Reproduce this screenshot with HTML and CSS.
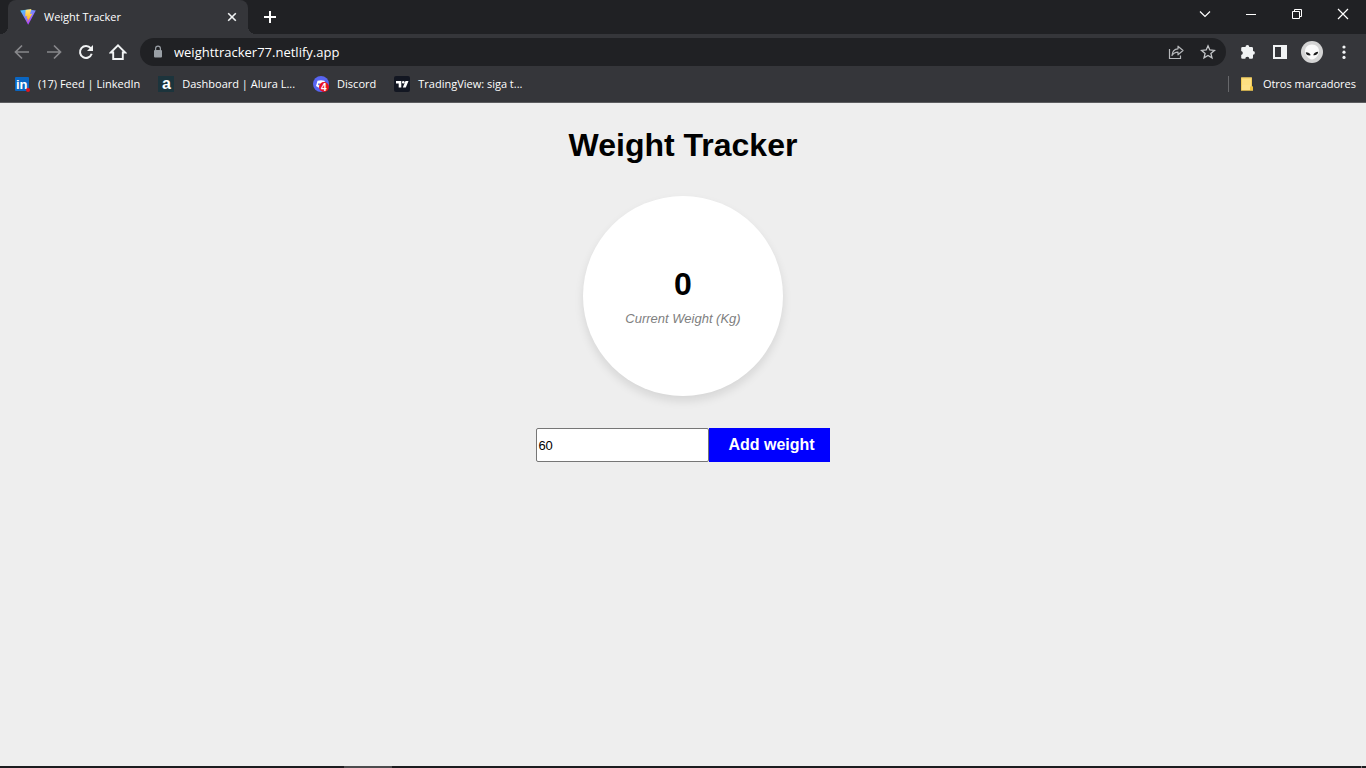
FILE: index.html
```html
<!DOCTYPE html>
<html lang="es">
<head>
<meta charset="utf-8">
<title>Weight Tracker</title>
<link rel="stylesheet" href="styles.css">
</head>
<body>
<header class="browser">
  <div class="tabstrip">
    <div class="tab">
      <svg class="icon" width="16" height="16" viewBox="0 0 16 16">
        <defs>
          <linearGradient id="shield" x1="0" y1="0" x2="0.6" y2="1"><stop offset="0" stop-color="#41d1ff"/><stop offset="1" stop-color="#bd34fe"/></linearGradient>
          <linearGradient id="bolt" x1="0" y1="0" x2="0" y2="1"><stop offset="0" stop-color="#ffea83"/><stop offset="1" stop-color="#ffa800"/></linearGradient>
        </defs>
        <path d="M0.2 1.6 8 0.6 15.8 1.6 8.2 15.8Z" fill="url(#shield)"/>
        <path d="M11.4 0 5.600 1.1 5.200 7.400 7.200 7 6.600 10 8 9.600 7.300 13.200 12.300 4.800 10 5.100Z" fill="url(#bolt)"/>
      </svg>
      <span class="tab-title">Weight Tracker</span>
      <button class="tool tab-close" aria-label="Cerrar pestaña"><svg width="16" height="16" viewBox="0 0 16 16"><path d="M4.2 4.2 11.8 11.8M11.8 4.2 4.2 11.8" stroke="#f1f3f4" stroke-width="1.6"/></svg></button>
    </div>
    <button class="tool" aria-label="Nueva pestaña"><svg width="16" height="16" viewBox="0 0 16 16"><path d="M8 2V14M2 8H14" stroke="#fff" stroke-width="2"/></svg></button>
    <div class="window-controls">
      <button class="window-button" aria-label="Buscar pestañas"><svg width="12" height="12" viewBox="0 0 12 12"><path d="M1 3.5 6 8.5 11 3.5" fill="none" stroke="#fff" stroke-width="1.200"/></svg></button>
      <button class="window-button" aria-label="Minimizar"><svg width="12" height="12" viewBox="0 0 12 12"><path d="M1 6.5H11" stroke="#fff"/></svg></button>
      <button class="window-button" aria-label="Restaurar"><svg width="12" height="12" viewBox="0 0 12 12"><path d="M1.500 3.500H8.500V10.500H1.500ZM3.500 3.500V1.500H10.500V8.500H8.500" fill="none" stroke="#fff"/></svg></button>
      <button class="window-button" aria-label="Cerrar"><svg width="12" height="12" viewBox="0 0 12 12"><path d="M1 1 11 11M11 1 1 11" stroke="#fff" stroke-width="1.200"/></svg></button>
    </div>
  </div>

  <div class="toolbar">
    <button class="tool" aria-label="Atrás"><svg width="16" height="16" viewBox="0 0 16 16"><path d="M15 8H2M8 1.500 1.500 8 8 14.500" fill="none" stroke="#87888b" stroke-width="1.700"/></svg></button>
    <button class="tool" aria-label="Adelante"><svg width="16" height="16" viewBox="0 0 16 16"><path d="M1 8H14M8 1.500 14.500 8 8 14.500" fill="none" stroke="#87888b" stroke-width="1.700"/></svg></button>
    <button class="tool" aria-label="Recargar"><svg width="16" height="16" viewBox="0 0 16 16"><path d="M13.700 9.800A6 6 0 1 1 12.700 4.200" fill="none" stroke="#f1f3f4" stroke-width="2"/><path d="M15 1V7H9Z" fill="#f1f3f4"/></svg></button>
    <button class="tool" aria-label="Página principal"><svg width="18" height="18" viewBox="0 0 18 18"><path d="M1.800 9.500 9 2.400 16.200 9.500H13.800V16H4.200V9.500Z" fill="none" stroke="#f1f3f4" stroke-width="1.900"/></svg></button>
    <div class="address">
      <svg class="icon" width="12" height="14" viewBox="0 0 12 14"><rect x="2" y="5" width="8" height="7.500" rx="1" fill="#9aa0a6"/><path d="M3.600 5.500V3.500A2.400 2.400 0 0 1 8.400 3.500V5.500" fill="none" stroke="#9aa0a6" stroke-width="1.200"/></svg>
      <input class="address-input" type="text" aria-label="Dirección" value="weighttracker77.netlify.app">
      <button class="tool" aria-label="Compartir"><svg width="16" height="16" viewBox="0 0 16 16"><path d="M1.500 5V14.500H12.500V11.500" fill="none" stroke="#b6b8bb" stroke-width="1.200"/><path d="M4 11.500C4.300 7 6.500 5 10 4.800V2.200L15 6.500 10 10.800V8.200C7.500 8.200 5.500 9 4 11.500Z" fill="none" stroke="#b6b8bb" stroke-width="1.200" stroke-linejoin="round"/></svg></button>
      <button class="tool" aria-label="Añadir a marcadores"><svg width="16" height="16" viewBox="0 0 16 16"><path d="M8 1.800 9.800 6 14.400 6.400 10.900 9.400 12 13.900 8 11.500 4 13.900 5.100 9.400 1.600 6.400 6.200 6Z" fill="none" stroke="#c4c6c9" stroke-width="1.300"/></svg></button>
    </div>
    <button class="tool" aria-label="Extensiones"><svg width="16" height="16" viewBox="0 0 16 16"><path d="M5.500 3A1.900 1.900 0 0 1 9.300 3H11.700A1.300 1.300 0 0 1 13 4.300V6.900A1.900 1.900 0 0 1 13 10.700V13.500A1.300 1.300 0 0 1 11.700 14.800H9.300A2 2 0 0 0 5.300 14.800H2.500A1.300 1.300 0 0 1 1.200 13.500V11A2.100 2.100 0 0 0 1.200 6.900V4.300A1.300 1.300 0 0 1 2.500 3Z" fill="#f1f3f4"/></svg></button>
    <button class="tool" aria-label="Panel lateral"><svg width="16" height="16" viewBox="0 0 16 16"><path d="M1 1H15V15H1ZM3 3V13H9V3Z" fill="#f1f3f4" fill-rule="evenodd"/></svg></button>
    <button class="tool" aria-label="Perfil"><svg width="22" height="22" viewBox="0 0 22 22"><circle cx="11" cy="11" r="11" fill="#d4d4d4"/><path d="M11 3.500C6.500 3.500 4 6.500 4 10.500 4.200 14.500 8.200 18.500 11 18.500S17.800 14.500 18 10.500C18 6.500 15.500 3.500 11 3.500Z" fill="#fafafa"/><path d="M4.800 11.200C7.200 11.200 9.300 12.200 9.700 14.300 7 14.800 5 13.700 4.800 11.200ZM17.200 10.800C14.700 10.800 12.700 12 12.300 14.200 15 14.600 17 13.300 17.200 10.800Z" fill="#1b1b1b"/></svg></button>
    <button class="tool" aria-label="Menú"><svg width="16" height="16" viewBox="0 0 16 16"><g fill="#f1f3f4"><circle cx="8" cy="3" r="1.600"/><circle cx="8" cy="8.200" r="1.600"/><circle cx="8" cy="13.400" r="1.600"/></g></svg></button>
  </div>

  <nav class="bookmarks" aria-label="Marcadores">
    <a class="bookmark" href="#">
      <svg class="icon" width="16" height="16" viewBox="0 0 16 16"><rect x="1" y="1" width="14" height="14" rx="1" fill="#0a66c2"/><text class="logo-text" x="2" y="12.500" font-size="13" fill="#fff">in</text><circle cx="14" cy="14" r="2" fill="#e0131d"/></svg>
      <span>(17) Feed | LinkedIn</span>
    </a>
    <a class="bookmark" href="#">
      <svg class="icon" width="16" height="16" viewBox="0 0 16 16"><rect width="16" height="16" fill="#1c343c"/><text class="logo-text" x="4" y="13" font-size="16" fill="#fff">a</text></svg>
      <span>Dashboard | Alura L...</span>
    </a>
    <a class="bookmark" href="#">
      <svg class="icon" width="16" height="16" viewBox="0 0 16 16"><circle cx="8" cy="8" r="8" fill="#5865f2"/><path d="M4.500 4.700Q8 3.700 11.500 4.700L13 10 10.500 11.500H5.500L3 10Z" fill="#fff"/><circle cx="6" cy="8.300" r="1" fill="#5865f2"/><circle cx="11" cy="11" r="5" fill="#e81123"/><text class="logo-text" x="8" y="14.500" font-size="10" fill="#fff">4</text></svg>
      <span>Discord</span>
    </a>
    <a class="bookmark" href="#">
      <svg class="icon" width="16" height="16" viewBox="0 0 16 16"><rect width="16" height="16" rx="2" fill="#131722"/><path d="M2 5H7.300V11.500H4.700V7.500H2ZM11.500 5H14.500L11.800 11.500H8.800Z" fill="#fff"/><circle cx="9.300" cy="6.300" r="1.300" fill="#fff"/></svg>
      <span>TradingView: siga t...</span>
    </a>
    <a class="bookmark other-bookmarks" href="#">
      <svg class="icon" width="16" height="16" viewBox="0 0 16 16"><path d="M2 1.500H13V11L14 10.500V14.500H2Z" fill="#ffe082"/><path d="M2.500 14V2H12.500V11.500" fill="none" stroke="#f2cc58"/><path d="M2 14H11V10.500H14V14.500H2Z" fill="#f2c53d"/><rect x="3" y="9" width="8" height="5" fill="#ffe28a"/></svg>
      <span>Otros marcadores</span>
    </a>
  </nav>
</header>

<main class="page">
  <h1 class="title">Weight Tracker</h1>
  <section class="weight-circle" aria-label="Current Weight">
    <span class="weight-value">0</span>
    <small class="weight-label">Current Weight (Kg)</small>
  </section>
  <form class="weight-form">
    <input class="weight-input" type="number" aria-label="Weight" value="60">
    <button class="weight-submit" type="submit">Add weight</button>
  </form>
</main>
<footer class="taskbar"><span class="taskbar-active"></span><span class="taskbar-edge"></span></footer>
</body>
</html>
```

FILE: styles.css
```css
* { box-sizing: border-box; }

body {
  margin: 0;
  min-height: 100vh;
  display: flex;
  flex-direction: column;
  background: #eee;
  font-family: "Liberation Sans", Arial, sans-serif;
}

button { font: inherit; border: 0; cursor: pointer; }
svg { display: block; }
.icon { flex: none; }

.browser {
  background: #35363a;
  border-bottom: 1px solid #5c5d60;
  color: #fff;
  font: 12px/16px "Open Sans", "Noto Sans", sans-serif;
}

.tool {
  flex: none;
  display: grid;
  place-items: center;
  width: 32px;
  height: 28px;
  padding: 0;
  background: transparent;
}

.tabstrip {
  display: flex;
  height: 34px;
  padding-left: 8px;
  background: #202124;
}

.tabstrip > .tool { height: 34px; margin-left: 6px; }

.tab {
  position: relative;
  display: flex;
  align-items: center;
  gap: 8px;
  width: 240px;
  padding: 0 8px 0 12px;
  background: #35363a;
  border-radius: 8px 8px 0 0;
}

/* Curved feet where the active tab meets the toolbar */
.tab::before,
.tab::after {
  content: "";
  position: absolute;
  bottom: 0;
  width: 8px;
  height: 8px;
}

.tab::before { right: 100%; background: radial-gradient(circle at 0 0, #202124 8px, #35363a 8px); }
.tab::after { left: 100%; background: radial-gradient(circle at 100% 0, #202124 8px, #35363a 8px); }

.tab-title { flex: 1; font-size: 11px; }
.tab-close { width: 16px; }

.window-controls { display: flex; margin-left: auto; height: 28px; }

.window-button {
  display: grid;
  place-items: center;
  width: 46px;
  padding: 0;
  background: transparent;
}

.toolbar {
  display: flex;
  align-items: center;
  height: 36px;
  padding: 0 6px;
}

.address {
  flex: 1;
  display: flex;
  align-items: center;
  height: 28px;
  margin: 0 6px;
  padding: 0 2px 0 12px;
  background: #202124;
  border-radius: 14px;
}

.address-input {
  flex: 1;
  min-width: 0;
  margin-left: 10px;
  padding: 0;
  border: 0;
  background: transparent;
  color: #fff;
  font: 13px/20px "Open Sans", "Noto Sans", sans-serif;
}

.bookmarks {
  display: flex;
  align-items: center;
  gap: 18px;
  height: 32px;
  padding: 0 10px 4px 14px;
}

.bookmark {
  display: flex;
  align-items: center;
  gap: 8px;
  color: #fff;
  font-size: 11px;
  text-decoration: none;
}

.other-bookmarks {
  margin-left: auto;
  padding-left: 10px;
  border-left: 1px solid #67686b;
}

.logo-text { font-family: "Liberation Sans", sans-serif; font-weight: bold; }

.page {
  flex: 1;
  display: flex;
  flex-direction: column;
  align-items: center;
}

.title {
  margin: 24px 0 32px;
  font-size: 32px;
  line-height: 37px;
}

.weight-circle {
  display: flex;
  flex-direction: column;
  align-items: center;
  justify-content: center;
  gap: 8px;
  width: 200px;
  height: 200px;
  margin-bottom: 32px;
  border-radius: 50%;
  background: #fff;
  box-shadow: 0 5px 10px rgba(0, 0, 0, 0.1);
}

.weight-value { font-size: 32px; line-height: 37px; font-weight: bold; }
.weight-label { font-size: 13px; line-height: 16px; font-style: italic; color: #808080; }

.weight-form { display: flex; }

.weight-input {
  width: 173px;
  padding: 1px;
  border: 1px solid #767676;
  border-radius: 2px;
  background: #fff;
  font: 13px "Liberation Sans", Arial, sans-serif;
}

.weight-submit {
  padding: 8px 15px 8px 19px;
  background: #00f;
  color: #fff;
  font-size: 16px;
  line-height: 18px;
  font-weight: bold;
}

.taskbar {
  display: flex;
  justify-content: space-between;
  height: 2px;
  padding: 0 4px 0 344px;
  background: #1c1c1f;
}

.taskbar-active { width: 48px; background: #4c4c4e; }
.taskbar-edge { width: 1px; background: #77777a; }
```
